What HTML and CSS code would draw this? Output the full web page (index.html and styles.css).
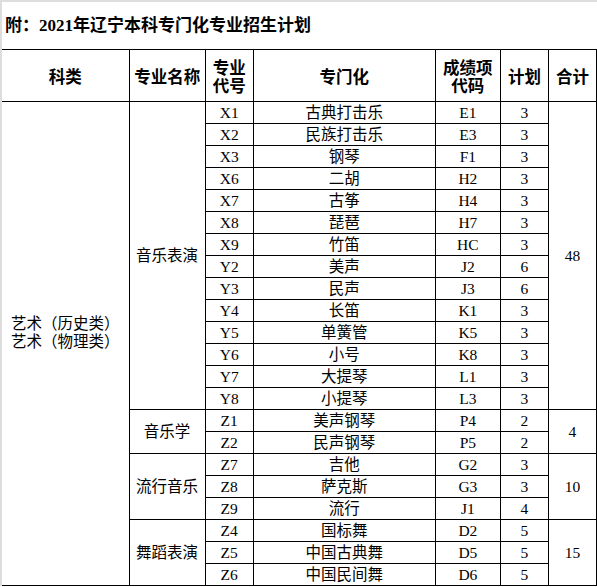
FILE: index.html
```html
<!DOCTYPE html>
<html lang="zh-CN">
<head>
<meta charset="utf-8">
<title>2021年辽宁本科专门化专业招生计划</title>
<link rel="stylesheet" href="styles.css">
</head>
<body>
<div class="sheet">
  <div class="title">附：2021年辽宁本科专门化专业招生计划</div>
  <table class="plan">
    <colgroup>
      <col class="c1"><col class="c2"><col class="c3"><col class="c4"><col class="c5"><col class="c6"><col class="c7">
    </colgroup>
    <thead>
      <tr class="head">
        <th class="first">科类</th>
        <th>专业名称</th>
        <th><span class="ln">专业</span><span class="ln">代号</span></th>
        <th>专门化</th>
        <th><span class="ln">成绩项</span><span class="ln">代码</span></th>
        <th>计划</th>
        <th>合计</th>
      </tr>
    </thead>
    <tbody>
      <tr><td class="first cat" rowspan="22"><span class="ln">艺术（历史类）</span><span class="ln">艺术（物理类）</span></td><td rowspan="14">音乐表演</td><td>X1</td><td>古典打击乐</td><td>E1</td><td>3</td><td rowspan="14">48</td></tr>
      <tr><td>X2</td><td>民族打击乐</td><td>E3</td><td>3</td></tr>
      <tr><td>X3</td><td>钢琴</td><td>F1</td><td>3</td></tr>
      <tr><td>X6</td><td>二胡</td><td>H2</td><td>3</td></tr>
      <tr><td>X7</td><td>古筝</td><td>H4</td><td>3</td></tr>
      <tr><td>X8</td><td>琵琶</td><td>H7</td><td>3</td></tr>
      <tr><td>X9</td><td>竹笛</td><td>HC</td><td>3</td></tr>
      <tr><td>Y2</td><td>美声</td><td>J2</td><td>6</td></tr>
      <tr><td>Y3</td><td>民声</td><td>J3</td><td>6</td></tr>
      <tr><td>Y4</td><td>长笛</td><td>K1</td><td>3</td></tr>
      <tr><td>Y5</td><td>单簧管</td><td>K5</td><td>3</td></tr>
      <tr><td>Y6</td><td>小号</td><td>K8</td><td>3</td></tr>
      <tr><td>Y7</td><td>大提琴</td><td>L1</td><td>3</td></tr>
      <tr><td>Y8</td><td>小提琴</td><td>L3</td><td>3</td></tr>
      <tr><td rowspan="2">音乐学</td><td>Z1</td><td>美声钢琴</td><td>P4</td><td>2</td><td rowspan="2">4</td></tr>
      <tr><td>Z2</td><td>民声钢琴</td><td>P5</td><td>2</td></tr>
      <tr><td rowspan="3">流行音乐</td><td>Z7</td><td>吉他</td><td>G2</td><td>3</td><td rowspan="3">10</td></tr>
      <tr><td>Z8</td><td>萨克斯</td><td>G3</td><td>3</td></tr>
      <tr><td>Z9</td><td>流行</td><td>J1</td><td>4</td></tr>
      <tr><td rowspan="3">舞蹈表演</td><td>Z4</td><td>国标舞</td><td>D2</td><td>5</td><td rowspan="3">15</td></tr>
      <tr><td>Z5</td><td>中国古典舞</td><td>D5</td><td>5</td></tr>
      <tr><td>Z6</td><td>中国民间舞</td><td>D6</td><td>5</td></tr>
    </tbody>
  </table>
</div>
</body>
</html>
```
FILE: styles.css
```css
html, body {
  margin: 0;
  padding: 0;
  background: #ffffff;
}

.sheet {
  width: 595px;
  border-left: 2px solid #dddddd;
  border-top: 2px solid #dddddd;
  font-family: "Liberation Serif", "Noto Sans CJK SC", serif;
  color: #000;
}

.title {
  height: 47px;
  padding-left: 3px;
  display: flex;
  align-items: center;
  font-size: 17px;
  font-weight: bold;
  line-height: 1;
}

.plan {
  border-collapse: collapse;
  table-layout: fixed;
  width: 595px;
}

.c1 { width: 127px; }
.c2 { width: 76px; }
.c3 { width: 48px; }
.c4 { width: 182px; }
.c5 { width: 65px; }
.c6 { width: 48px; }
.c7 { width: 48px; }

.plan th,
.plan td {
  border: 1px solid #000;
  padding: 0;
  text-align: center;
  vertical-align: middle;
  white-space: nowrap;
}

.plan .first {
  border-left: none;
}

.ln {
  display: block;
}

.plan th {
  font-family: "Noto Sans CJK SC", sans-serif;
  font-weight: bold;
  font-size: 16.5px;
  line-height: 18px;
}

.head {
  height: 52px;
}

.plan tbody tr {
  height: 22px;
}

.plan td {
  font-size: 15.5px;
  line-height: 18px;
}

.plan td.cat {
  padding-bottom: 22px;
}
```
